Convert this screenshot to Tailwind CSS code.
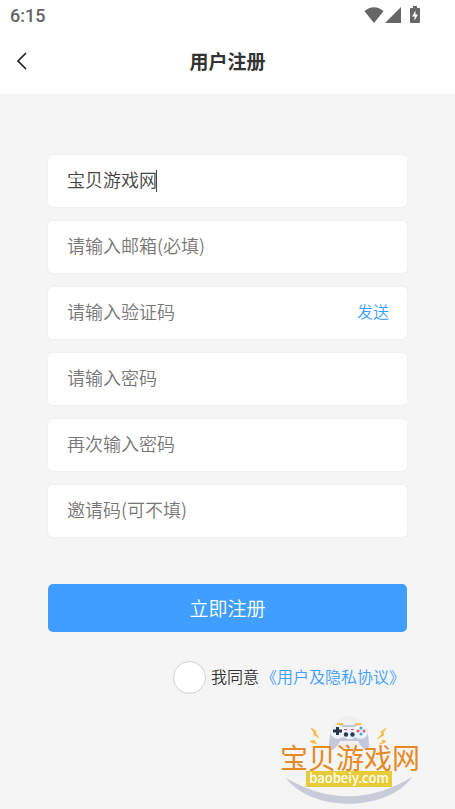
<!DOCTYPE html>
<html lang="zh-CN">
<head>
<meta charset="utf-8">
<meta name="viewport" content="width=device-width, initial-scale=1">
<title>用户注册</title>
<script src="https://cdn.jsdelivr.net/npm/@tailwindcss/browser@4"></script>
</head>
<body class="flex min-h-screen flex-col bg-[#f5f5f5] font-['Noto_Sans_CJK_SC',sans-serif] text-[#333]">
  <header class="bg-white">
    <div class="flex h-8 items-center justify-between pl-[10px] pr-[35px] text-[#666]">
      <span class="font-[Roboto,sans-serif] text-[18px] font-medium leading-8">6:15</span>
      <div class="flex items-center pb-[3px]" aria-hidden="true">
        <svg class="h-4 w-5" viewBox="0 0 20 16" fill="currentColor"><path d="M0.500 4.200C6-1 14-1 19.500 4.200L10 16Z"/></svg>
        <svg class="ml-px h-4 w-4" viewBox="0 0 16 16" fill="currentColor"><path d="M16 0V16H0Z"/></svg>
        <svg class="ml-[9px] h-[17px] w-[10px]" viewBox="0 0 10 17"><path d="M3 0H7V2H9Q10 2 10 3V16Q10 17 9 17H1Q0 17 0 16V3Q0 2 1 2H3Z" fill="currentColor"/><path d="M5.500 4.500L2 10.500H4.500V14.500L8 8.500H5.500Z" fill="white"/></svg>
      </div>
    </div>
    <div class="grid h-[62px] grid-cols-[48px_1fr_48px] items-center pb-[4px]">
      <button type="button" aria-label="返回" class="flex h-12 items-center pl-4">
        <svg class="h-[18px] w-3" viewBox="0 0 12 18" fill="none" stroke="#222" stroke-width="1.700"><path d="M10 1L2 9L10 17"/></svg>
      </button>
      <h1 class="text-center text-[19px] font-bold leading-7">用户注册</h1>
    </div>
  </header>

  <main class="flex flex-1 flex-col px-12 pt-[61px]">
    <form class="flex flex-col">
      <div class="flex flex-col gap-[14px]">
        <div class="relative h-[52px] rounded-[5px] bg-white shadow-[0_0_2px_#e8e8e8]">
          <input type="text" aria-label="用户名" value="宝贝游戏网" class="block h-full w-full bg-transparent px-[19px] pb-[4px] text-[18px] font-[350] text-[#444] caret-transparent outline-none">
          <span class="absolute left-[108px] top-[15px] h-[22px] w-px bg-[#444]"></span>
        </div>
        <input type="email" aria-label="邮箱" placeholder="请输入邮箱(必填)" class="block h-[52px] w-full rounded-[5px] bg-white px-[19px] pb-[4px] text-[18px] font-[350] shadow-[0_0_2px_#e8e8e8] outline-none placeholder:text-[#777]">
        <div class="flex h-[52px] items-center rounded-[5px] bg-white pr-[18px] shadow-[0_0_2px_#e8e8e8]">
          <input type="text" aria-label="验证码" placeholder="请输入验证码" class="h-full min-w-0 flex-1 bg-transparent pb-[4px] pl-[19px] text-[18px] font-[350] outline-none placeholder:text-[#777]">
          <button type="button" class="pb-[4px] text-[16px] font-[350] text-[#409eff]">发送</button>
        </div>
        <input type="password" aria-label="密码" placeholder="请输入密码" class="block h-[52px] w-full rounded-[5px] bg-white px-[19px] pb-[4px] text-[18px] font-[350] shadow-[0_0_2px_#e8e8e8] outline-none placeholder:text-[#777]">
        <input type="password" aria-label="确认密码" placeholder="再次输入密码" class="block h-[52px] w-full rounded-[5px] bg-white px-[19px] pb-[4px] text-[18px] font-[350] shadow-[0_0_2px_#e8e8e8] outline-none placeholder:text-[#777]">
        <input type="text" aria-label="邀请码" placeholder="邀请码(可不填)" class="block h-[52px] w-full rounded-[5px] bg-white px-[19px] pb-[4px] text-[18px] font-[350] shadow-[0_0_2px_#e8e8e8] outline-none placeholder:text-[#777]">
      </div>
      <button type="submit" class="mt-[47px] h-12 rounded-[5px] bg-[#409eff] text-[19px] font-[350] text-white">立即注册</button>
      <div class="mt-[29px] flex items-center justify-end pr-[2px] text-[16px] font-[350]">
        <input id="agree" type="checkbox" class="size-[33px] appearance-none rounded-full border border-[#d1d1d1] bg-white checked:bg-[#409eff]">
        <label for="agree" class="ml-[5px] pb-[4px]">我同意</label>
        <a href="#" class="ml-[2px] pb-[4px] text-[#409eff]">《用户及隐私协议》</a>
      </div>
    </form>
  </main>

  <footer class="flex justify-end pr-[25px]">
    <svg class="h-[99px] w-[160px]" viewBox="270 710 160 99" role="img" aria-label="宝贝游戏网 baobeiy.com">
      <circle cx="349" cy="733" r="17" fill="#efefef"/>
      <path d="M286 778Q349 815 412 777C388 812 312 813 286 778Z" fill="#c9cbd8"/>
      <g fill="#f5b93a" stroke="#f5b93a" stroke-width="0.600">
        <path d="M311 728L316 731L315.500 733L319 738L313.500 734.500L314 732.500Z"/>
        <path d="M310 741L315 740.500L314.500 742L317 743.500L312.500 743Z"/>
        <path d="M386 728L381 732L382 734L377 739L384 735L383 733Z"/>
        <path d="M386 741L382 740L383 742L379 744L384 743Z"/>
        <rect x="337" y="723.500" width="6" height="1.500" rx="0.700"/>
        <rect x="355" y="723.500" width="6" height="1.500" rx="0.700"/>
      </g>
      <path d="M337 725Q331 725 330 733L329 745Q329 750 332 750Q336 749 340 741L358 741Q362 749 366 750Q369 750 369 745L368 733Q367 725 361 725Z" fill="#c5c8dc"/>
      <path d="M337 725Q331 725 330 733Q334 741 341 738Q344 736 347 739H352Q355 736 357 738Q365 741 368 733Q367 725 361 725Q356 725 355 727H343Q341 725 337 725Z" fill="#f1f2f8"/>
      <path d="M336 727H339V729.500H342V732.500H339V735H336V732.500H333V729.500H336Z" fill="#243348"/>
      <circle cx="346" cy="734.500" r="2.200" fill="#243c59"/><circle cx="352.500" cy="734.500" r="2.200" fill="#243c59"/>
      <path d="M344 729H347V730H344ZM351 729H354V730H351Z" fill="#dc5262"/>
      <circle cx="361" cy="728" r="1.500" fill="#39a7d3"/><circle cx="361" cy="734" r="1.500" fill="#39a7d3"/>
      <circle cx="358" cy="731" r="1.500" fill="#e95861"/><circle cx="364" cy="731" r="1.500" fill="#e95861"/>
      <text x="280" y="769" font-size="28" fill="#e58a24" font-family="Noto Sans CJK SC, sans-serif">宝贝游戏网</text>
      <rect x="306" y="771" width="86" height="16" fill="#e8cc37"/>
      <text x="349" y="783" text-anchor="middle" font-size="13" font-weight="500" fill="white" font-family="Noto Sans CJK SC, sans-serif">baobeiy.com</text>
    </svg>
  </footer>
</body>
</html>
